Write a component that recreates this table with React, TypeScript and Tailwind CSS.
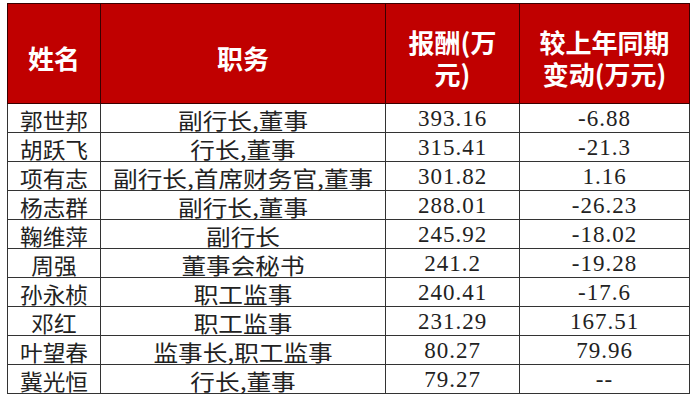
import React from "react";

const rows: [string, string, string, string][] = [
  ["郭世邦", "副行长,董事", "393.16", "-6.88"],
  ["胡跃飞", "行长,董事", "315.41", "-21.3"],
  ["项有志", "副行长,首席财务官,董事", "301.82", "1.16"],
  ["杨志群", "副行长,董事", "288.01", "-26.23"],
  ["鞠维萍", "副行长", "245.92", "-18.02"],
  ["周强", "董事会秘书", "241.2", "-19.28"],
  ["孙永桢", "职工监事", "240.41", "-17.6"],
  ["邓红", "职工监事", "231.29", "167.51"],
  ["叶望春", "监事长,职工监事", "80.27", "79.96"],
  ["冀光恒", "行长,董事", "79.27", "--"],
];

const cjk = "font-['Noto_Sans_CJK_SC',sans-serif]";
const num = "font-['Liberation_Serif','Noto_Sans_CJK_SC',serif]";

export default function App() {
  return (
    <div className="w-[700px] h-[406px] bg-white overflow-hidden pt-[3px] pl-[7px]">
      <table className="border-collapse table-fixed w-[683px] text-[#222]">
        <colgroup>
          <col className="w-[93px]" />
          <col className="w-[285px]" />
          <col className="w-[134px]" />
          <col className="w-[170px]" />
        </colgroup>
        <thead>
          <tr className={`h-[100px] bg-[#c00000] text-white text-[26px] leading-[32px] ${cjk}`}>
            <th className="border border-[#3a0000] pt-2 font-bold">姓名</th>
            <th className="border border-[#3a0000] pt-2 font-bold">职务</th>
            <th className="border border-[#3a0000] pt-2 font-bold">
              <div>报酬(万</div>
              <div>元)</div>
            </th>
            <th className="border border-[#3a0000] pt-2 font-bold">
              <div>较上年同期</div>
              <div>变动(万元)</div>
            </th>
          </tr>
        </thead>
        <tbody>
          {rows.map(([name, role, pay, change]) => (
            <tr key={name} className="h-[29px]">
              <td className={`border border-[#333] text-center text-[22px] leading-[26px] pt-[2px] ${cjk}`}>
                <span className="inline-block scale-x-[1.03]">{name}</span>
              </td>
              <td className={`border border-[#333] text-center text-[22px] leading-[26px] pt-[2px] ${cjk}`}>
                <span className="inline-block scale-x-[1.12] whitespace-nowrap">{role}</span>
              </td>
              <td className={`border border-[#333] text-center text-[23px] leading-[26px] pt-[2px] tracking-[1px] ${num}`}>
                {pay}
              </td>
              <td className={`border border-[#333] text-center text-[23px] leading-[26px] pt-[2px] tracking-[1px] ${num}`}>
                {change}
              </td>
            </tr>
          ))}
        </tbody>
      </table>
    </div>
  );
}
